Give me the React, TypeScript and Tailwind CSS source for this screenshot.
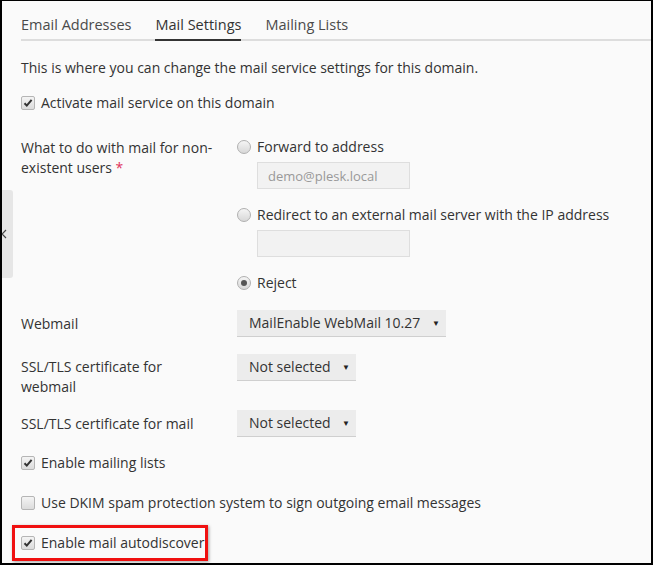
import React from 'react';

const font = { fontFamily: '"Open Sans", "Noto Sans", sans-serif' };

function Checkbox({ checked }: { checked?: boolean }) {
  return (
    <span className="flex h-[14px] w-[14px] shrink-0 items-center justify-center rounded-[2px] border border-[#b5b5b5] bg-gradient-to-b from-[#f4f4f4] to-[#dcdcdc]">
      {checked && (
        <svg width="10" height="10" viewBox="0 0 10 10">
          <path d="M1.5 5.2 L3.8 7.6 L8.6 1.8" fill="none" stroke="#333" strokeWidth="2" />
        </svg>
      )}
    </span>
  );
}

function Radio({ checked }: { checked?: boolean }) {
  return (
    <span className="flex h-[14px] w-[14px] shrink-0 items-center justify-center rounded-full border border-[#b0b0b0] bg-gradient-to-b from-[#f5f5f5] to-[#d8d8d8]">
      {checked && <span className="h-[6px] w-[6px] rounded-full bg-[#555]" />}
    </span>
  );
}

function CheckRow({ checked, label, className = '' }: { checked?: boolean; label: string; className?: string }) {
  return (
    <label className={`flex h-5 items-center gap-[6px] ${className}`}>
      <Checkbox checked={checked} />
      <span>{label}</span>
    </label>
  );
}

function RadioRow({ checked, label, className = '' }: { checked?: boolean; label: string; className?: string }) {
  return (
    <label className={`flex h-5 items-center gap-[6px] ${className}`}>
      <Radio checked={checked} />
      <span>{label}</span>
    </label>
  );
}

function Select({ value, width }: { value: string; width: string }) {
  return (
    <div className={`flex h-[27px] items-center justify-between border-b border-[#cfcfcf] bg-[#ececec] pl-[12px] pr-[6px] ${width}`}>
      <span>{value}</span>
      <span className="text-[8px] text-[#222]">▼</span>
    </div>
  );
}

const TABS = [
  { label: 'Email Addresses' },
  { label: 'Mail Settings', active: true },
  { label: 'Mailing Lists' },
];

export default function App() {
  return (
    <div
      style={font}
      className="relative h-[565px] w-[653px] overflow-hidden border-t border-r-2 border-b-2 border-l-2 border-black bg-[#fafafa] text-[14px] leading-5 text-[#333]"
    >
      {/* side collapse handle */}
      <div className="absolute top-[189px] left-0 flex h-[88px] w-[11px] items-center rounded-r-[3px] bg-[#e6e6e6]">
        <svg width="6" height="10" viewBox="0 0 6 10" className="-ml-[1px]">
          <path d="M5 1 L1 5 L5 9" fill="none" stroke="#444" strokeWidth="1.2" />
        </svg>
      </div>

      <div className="pl-[19px]">
        <div className="flex gap-6 border-b-2 border-[#dddddd] pt-[14px] text-[14.5px]">
          {TABS.map((t) => (
            <div
              key={t.label}
              className={`-mb-[2px] pb-[4px] ${t.active ? 'border-b-2 border-[#333]' : 'border-b-2 border-transparent text-[#4a4a4a]'}`}
            >
              {t.label}
            </div>
          ))}
        </div>

        <p className="mt-[17px]">This is where you can change the mail service settings for this domain.</p>

        <CheckRow checked label="Activate mail service on this domain" className="mt-[15px]" />

        <div className="mt-[24px] flex">
          <p className="w-[216px] shrink-0 pt-px pr-4">
            What to do with mail for non-existent users <span className="text-[#e0335a]">*</span>
          </p>
          <div>
            <RadioRow label="Forward to address" />
            <div className="mt-[5px] ml-[20px] flex h-[27px] w-[153px] items-center border border-[#dedede] bg-[#f2f2f2] px-[10px] text-[13px] text-[#999]">
              demo@plesk.local
            </div>
            <RadioRow label="Redirect to an external mail server with the IP address" className="mt-[16px]" />
            <div className="mt-[5px] ml-[20px] h-[27px] w-[153px] border border-[#dedede] bg-[#f2f2f2]" />
            <RadioRow checked label="Reject" className="mt-[16px]" />
          </div>
        </div>

        <div className="mt-[17px] flex items-center">
          <div className="w-[216px] shrink-0">Webmail</div>
          <Select value="MailEnable WebMail 10.27" width="w-[209px]" />
        </div>

        <div className="mt-[17px] flex items-start">
          <div className="w-[216px] shrink-0 pt-[3px] pr-8">SSL/TLS certificate for webmail</div>
          <Select value="Not selected" width="w-[119px]" />
        </div>

        <div className="mt-[13px] flex items-center">
          <div className="w-[216px] shrink-0">SSL/TLS certificate for mail</div>
          <Select value="Not selected" width="w-[119px]" />
        </div>

        <CheckRow checked label="Enable mailing lists" className="mt-[16px]" />
        <CheckRow label="Use DKIM spam protection system to sign outgoing email messages" className="mt-[20px]" />

        <div className="mt-[12px] -ml-[9px] flex h-[36px] w-[196px] items-center border-[3px] border-[#f01010] pl-[6px] shadow-[1px_1px_3px_rgba(0,0,0,0.35)]">
          <CheckRow checked label="Enable mail autodiscover" />
        </div>
      </div>
    </div>
  );
}
